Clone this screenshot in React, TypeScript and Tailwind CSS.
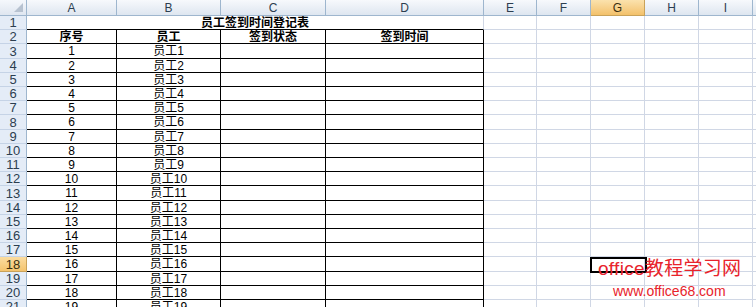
import React from 'react';

const rowHeights = [
  'h-[14px]', 'h-[14px]', 'h-[15px]', 'h-[14px]', 'h-[14px]', 'h-[14px]', 'h-[14px]',
  'h-[15px]', 'h-[14px]', 'h-[14px]', 'h-[14px]', 'h-[14px]', 'h-[15px]', 'h-[14px]',
  'h-[14px]', 'h-[14px]', 'h-[14px]', 'h-[15px]', 'h-[14px]', 'h-[14px]', 'h-[14px]',
];

const tableCols = ['w-[90px]', 'w-[104px]', 'w-[105px]', 'w-[158px]'];
const gridCols = [
  { l: 'E', w: 'w-[53px]' },
  { l: 'F', w: 'w-[54px]' },
  { l: 'G', w: 'w-[54px]', sel: true },
  { l: 'H', w: 'w-[54px]' },
  { l: 'I', w: 'w-[54px]' },
  { l: '', w: 'w-[20px]' },
];

const font = { fontFamily: '"Liberation Sans", "Noto Sans CJK SC", sans-serif' };

function HeaderRow() {
  const letters = ['A', 'B', 'C', 'D'];
  return (
    <div className="flex h-[16px] shrink-0">
      <div className="w-[27px] shrink-0 border-r border-b border-[#9eb6ce] bg-gradient-to-b from-[#f5f8fc] to-[#dfe6f0] relative">
        <svg className="absolute right-[3px] bottom-[3px]" width="9" height="9" viewBox="0 0 9 9">
          <polygon points="9,0 9,9 0,9" fill="#b7c2d0" />
        </svg>
      </div>
      {letters.map((l, i) => (
        <div
          key={l}
          className={`${tableCols[i]} shrink-0 border-r border-b border-[#9eb6ce] bg-gradient-to-b from-[#f7f9fc] to-[#dee6f0] flex items-center justify-center text-[12px] text-[#2c3e50] leading-none`}
        >
          {l}
        </div>
      ))}
      {gridCols.map((c, i) => (
        <div
          key={i}
          className={`${c.w} shrink-0 border-r border-b flex items-center justify-center text-[12px] leading-none ${
            c.sel
              ? 'border-[#c9a259] bg-gradient-to-b from-[#fbe2ad] to-[#f3c16a] text-[#3a2f10]'
              : 'border-[#9eb6ce] bg-gradient-to-b from-[#f7f9fc] to-[#dee6f0] text-[#2c3e50]'
          }`}
        >
          {c.l}
        </div>
      ))}
    </div>
  );
}

function RowHeader({ n, sel }: { n: number; sel?: boolean }) {
  return (
    <div
      className={`w-[27px] shrink-0 border-r border-b flex items-center justify-center text-[13px] leading-none ${
        sel
          ? 'border-[#c9a259] bg-gradient-to-b from-[#fbdc9f] to-[#f4c46e] text-[#3a2f10]'
          : 'border-r-[#9eb6ce] border-b-[#c5d3e6] bg-[#e4ecf7] text-[#2c3e50]'
      }`}
    >
      {n}
    </div>
  );
}

function GridCells() {
  return (
    <>
      {gridCols.map((c, i) => (
        <div key={i} className={`${c.w} shrink-0 border-r border-b border-[#d0d7e5]`} />
      ))}
    </>
  );
}

export default function App() {
  const rows: React.ReactNode[] = [];
  rows.push(
    <div key={1} className={`flex ${rowHeights[0]} shrink-0`}>
      <RowHeader n={1} />
      <div className="w-[457px] shrink-0 border-r border-r-[#d0d7e5] border-b border-b-black flex items-center justify-center text-[12px] font-bold text-black leading-none">
        员工签到时间登记表
      </div>
      <GridCells />
    </div>
  );
  const heads = ['序号', '员工', '签到状态', '签到时间'];
  rows.push(
    <div key={2} className={`flex ${rowHeights[1]} shrink-0`}>
      <RowHeader n={2} />
      {heads.map((h, i) => (
        <div
          key={i}
          className={`${tableCols[i]} shrink-0 border-r border-b border-black flex items-center justify-center text-[12px] font-bold text-black leading-none`}
        >
          {h}
        </div>
      ))}
      <GridCells />
    </div>
  );
  for (let r = 3; r <= 21; r++) {
    const k = r - 2;
    rows.push(
      <div key={r} className={`flex ${rowHeights[r - 1]} shrink-0`}>
        <RowHeader n={r} sel={r === 18} />
        <div className={`${tableCols[0]} shrink-0 border-r border-b border-black flex items-center justify-center text-[12px] text-black leading-none`}>
          {k}
        </div>
        <div className={`${tableCols[1]} shrink-0 border-r border-b border-black flex items-center justify-center text-[12px] text-black leading-none`}>
          员工{k}
        </div>
        <div className={`${tableCols[2]} shrink-0 border-r border-b border-black`} />
        <div className={`${tableCols[3]} shrink-0 border-r border-b border-black`} />
        <GridCells />
      </div>
    );
  }

  return (
    <div className="relative w-[756px] h-[307px] overflow-hidden bg-white" style={font}>
      <div className="flex flex-col">
        <HeaderRow />
        {rows}
      </div>
      <div className="absolute left-[590px] top-[257px] w-[57px] h-[16px] border-2 border-black" />
      <div className="absolute left-[598px] top-[258px] text-[19px] leading-[22px] tracking-[0.3px] text-[#e8232b] whitespace-nowrap">
        office教程学习网
      </div>
      <div className="absolute left-[613px] top-[282px] text-[14px] leading-[18px] text-[#e8232b] whitespace-nowrap">
        www.office68.com
      </div>
    </div>
  );
}
